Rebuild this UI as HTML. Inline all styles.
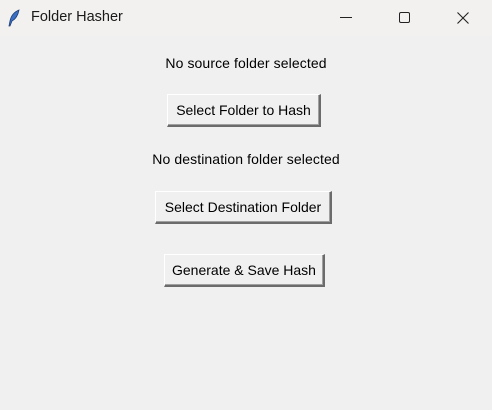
<!DOCTYPE html>
<html><head><meta charset="utf-8"><style>
*{margin:0;padding:0;box-sizing:border-box}
html,body{width:492px;height:410px;overflow:hidden;background:#f0f0f0;font-family:"Liberation Sans",sans-serif;font-size:14px;color:#000}
.tb{position:absolute;left:0;top:0;width:492px;height:36px;background:#f3f1ef}
.title{position:absolute;left:31px;top:9px;font-size:14.5px;color:#1a1a1a}
.lbl{position:absolute;left:0;width:492px;text-align:center;letter-spacing:0.1px}
.btn{position:absolute;background:#f0f0f0;text-align:center;border-top:1px solid #fff;border-left:1px solid #fff;border-right:2px solid #6b6b6b;border-bottom:2px solid #6b6b6b;box-shadow:inset -1px -1px 0 #a0a0a0;line-height:30px;white-space:nowrap}
</style></head><body>
<div class="tb">
<svg style="position:absolute;left:7px;top:9px" width="14" height="18" viewBox="0 0 14 18"><path d="M12 1 C7 3 4 7 3 12 L2 17 L3 17 L5 12 C9 10 11 6 12 1Z" fill="#3a6fc4" stroke="#1f3f78" stroke-width="0.8"/></svg>
<div class="title">Folder Hasher</div>
<svg style="position:absolute;left:340px;top:17px" width="12" height="2"><rect width="12" height="1" fill="#222"/></svg>
<svg style="position:absolute;left:399px;top:12px" width="12" height="12"><rect x="0.5" y="0.5" width="10" height="10" rx="1.5" fill="none" stroke="#222"/></svg>
<svg style="position:absolute;left:457px;top:12px" width="12" height="12"><path d="M0.5 0.5L11.5 11.5M11.5 0.5L0.5 11.5" stroke="#222" stroke-width="1.1"/></svg>
</div>
<div class="lbl" style="top:55px">No source folder selected</div>
<div class="btn" style="left:167px;top:94px;width:154px;height:33px">Select Folder to Hash</div>
<div class="lbl" style="top:151px">No destination folder selected</div>
<div class="btn" style="left:155px;top:191px;width:177px;height:33px">Select Destination Folder</div>
<div class="btn" style="left:164px;top:254px;width:161px;height:33px">Generate &amp; Save Hash</div>
</body></html>
